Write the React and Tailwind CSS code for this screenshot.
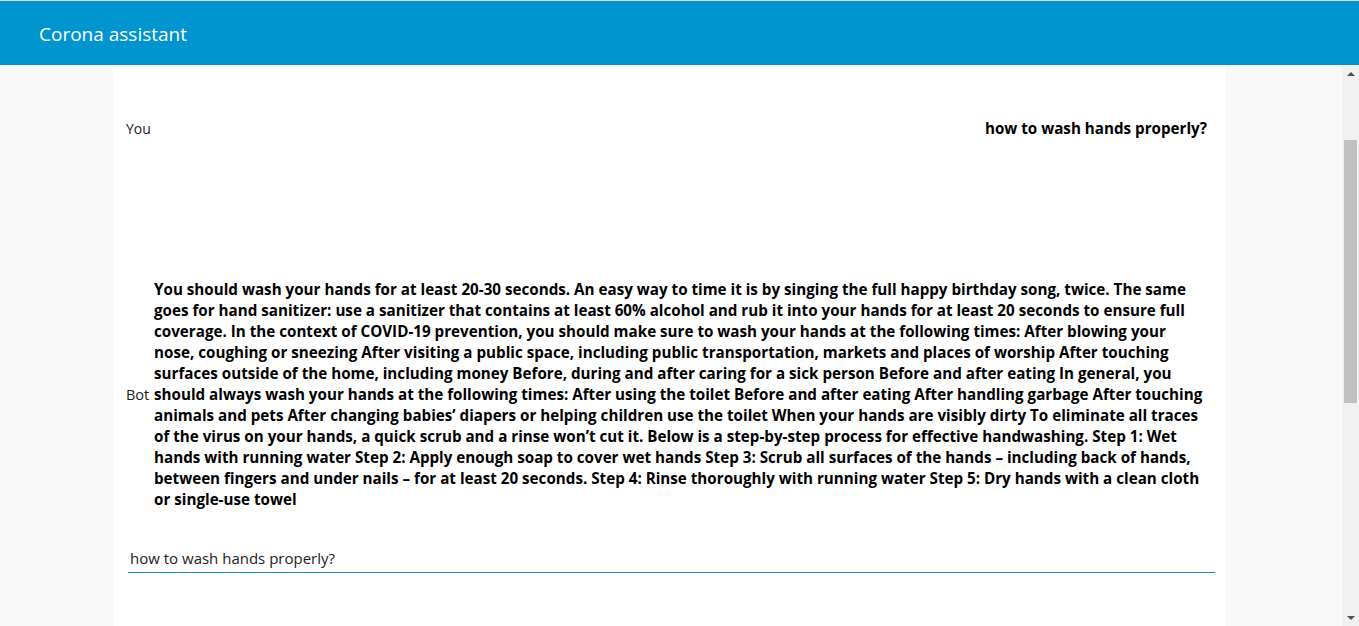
const answer =
  "You should wash your hands for at least 20-30 seconds. An easy way to time it is by singing the full happy birthday song, twice. The same goes for hand sanitizer: use a sanitizer that contains at least 60% alcohol and rub it into your hands for at least 20 seconds to ensure full coverage. In the context of COVID-19 prevention, you should make sure to wash your hands at the following times: After blowing your nose, coughing or sneezing After visiting a public space, including public transportation, markets and places of worship After touching surfaces outside of the home, including money Before, during and after caring for a sick person Before and after eating In general, you should always wash your hands at the following times: After using the toilet Before and after eating After handling garbage After touching animals and pets After changing babies\u2019 diapers or helping children use the toilet When your hands are visibly dirty To eliminate all traces of the virus on your hands, a quick scrub and a rinse won\u2019t cut it. Below is a step-by-step process for effective handwashing. Step 1: Wet hands with running water Step 2: Apply enough soap to cover wet hands Step 3: Scrub all surfaces of the hands \u2013 including back of hands, between fingers and under nails \u2013 for at least 20 seconds. Step 4: Rinse thoroughly with running water Step 5: Dry hands with a clean cloth or single-use towel";

const App = () => {
  return (
    <div
      className="h-[626px] overflow-hidden bg-[#f9f9f9] border-t border-[#d9d9d9] flex flex-col"
      style={{ fontFamily: '"Open Sans", "Noto Sans", sans-serif' }}
    >
      {/* Header */}
      <header className="h-16 shrink-0 bg-[#0095cf] flex items-center pl-[39px] pt-[3px]">
        <h1 className="text-[19px] text-white">Corona assistant</h1>
      </header>

      <div className="flex flex-1 min-h-0">
        {/* Chat column */}
        <div className="flex-1">
          <main className="ml-[113px] w-[1112px] h-full bg-white pt-[51px] px-[13px]">
            {/* User message */}
            <div className="flex items-center justify-between pr-[5px] h-6">
              <span className="text-[14px] text-[#222]">You</span>
              <span className="text-[15.2px] font-bold text-black">
                how to wash hands properly?
              </span>
            </div>

            {/* Bot message */}
            <div className="flex items-center mt-[139px]">
              <span className="text-[14.5px] text-[#222] w-[28px] shrink-0">Bot</span>
              <p className="text-[15.2px] leading-[21px] font-bold text-black w-[1050px]">
                {answer}
              </p>
            </div>

            {/* Input */}
            <div className="mt-[36px] border-b border-[#1a8bb3] mr-[-3px] ml-[2px]">
              <input
                type="text"
                defaultValue="how to wash hands properly?"
                className="w-full outline-none px-[2px] pb-[2px] text-[15px] text-[#222] bg-transparent"
              />
            </div>
          </main>
        </div>

        {/* Scrollbar */}
        <div className="w-[17px] shrink-0 bg-[#f1f1f1] flex flex-col items-center">
          <div className="h-[17px] flex items-center justify-center">
            <div className="w-0 h-0 border-l-4 border-r-4 border-b-4 border-l-transparent border-r-transparent border-b-[#505050]" />
          </div>
          <div className="mt-[58px] w-[13px] h-[263px] bg-[#c1c1c1]" />
          <div className="flex-1" />
          <div className="h-[17px] flex items-center justify-center">
            <div className="w-0 h-0 border-l-4 border-r-4 border-t-4 border-l-transparent border-r-transparent border-t-[#505050]" />
          </div>
        </div>
      </div>
    </div>
  );
};

export default App;
